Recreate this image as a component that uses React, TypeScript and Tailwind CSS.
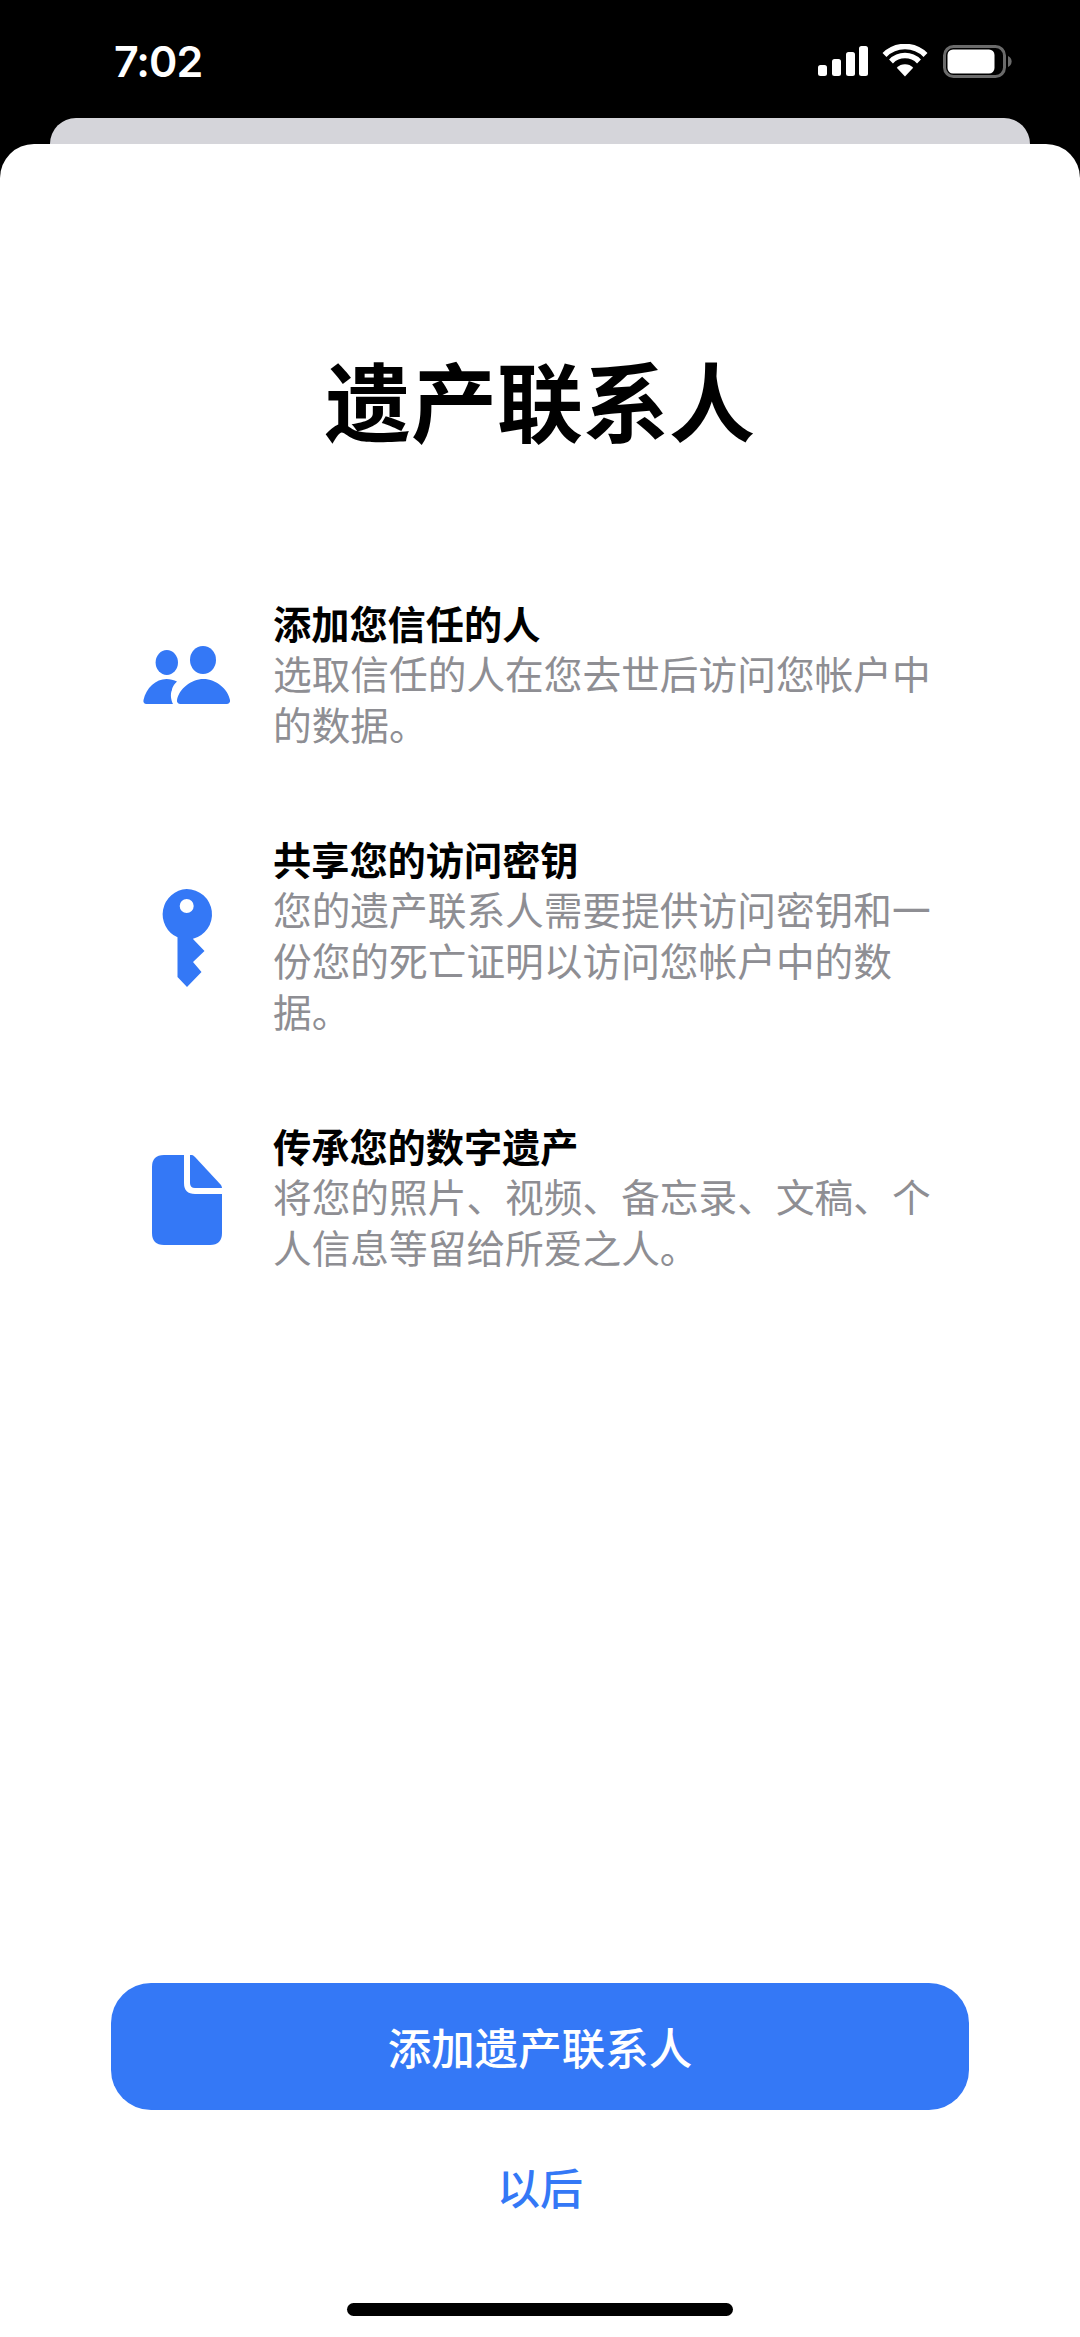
const cjk = "font-['Noto_Sans_CJK_SC','Noto_Sans_CJK_JP',sans-serif]";

function StatusIcons() {
  return (
    <svg width="194" height="34" viewBox="818 44 194 34" className="block">
      <rect x="818" y="65" width="9" height="11" rx="2.5" fill="#fff" />
      <rect x="832" y="59" width="9" height="17" rx="2.5" fill="#fff" />
      <rect x="846" y="52" width="9" height="24" rx="2.5" fill="#fff" />
      <rect x="859" y="46" width="9" height="30" rx="2.5" fill="#fff" />
      <path d="M884.5 55 A29 29 0 0 1 925.5 55" fill="none" stroke="#fff" strokeWidth="5.6" />
      <path d="M891 61.500 A19.500 19.500 0 0 1 919 61.500" fill="none" stroke="#fff" strokeWidth="5.4" />
      <path d="M905 76.500 L896.800 67.800 A11.500 11.500 0 0 1 913.200 67.800 Z" fill="#fff" />
      <rect x="944.500" y="46.500" width="60" height="30" rx="9" fill="none" stroke="#6b6b6b" strokeWidth="3" />
      <rect x="947.500" y="49.500" width="47" height="24" rx="5.500" fill="#fff" />
      <path d="M1008 56 A6 6 0 0 1 1008 67 Z" fill="#6b6b6b" />
    </svg>
  );
}

function PeopleIcon() {
  return (
    <svg width="94" height="62" viewBox="140 644 94 62" className="block mt-[2px]" fill="#3478F6">
      <ellipse cx="166.800" cy="662.500" rx="11.200" ry="12.500" />
      <ellipse cx="203" cy="660" rx="13" ry="14" />
      <path d="M143.500 700 C146 688 156 679 166.500 679 C170 679 174 680 177 681.500 C172 686 172 690 172 690 C170 694 171 700 173 704 L146.500 704 C144 704 143 702 143.500 700 Z" />
      <path d="M177 700 C179 689 191 679 203.500 679 C216 679 228 689 230 700 C230.500 702 229 704 226.500 704 L180.500 704 C178 704 176.500 702 177 700 Z" />
    </svg>
  );
}

function KeyIcon() {
  return (
    <svg width="94" height="100" viewBox="140 887 94 100" className="block mt-[5px]">
      <path
        fill="#3478F6"
        fillRule="evenodd"
        d="M186.700 888 A25.300 25.300 0 0 1 193 937.800 L193 938 L204.500 950 L193 961 L201.500 971 L187 986 L177.500 976 L177.500 936.300 A25.300 25.300 0 0 1 186.700 888 Z M186.700 898 A7 7 0 1 0 186.700 912 A7 7 0 1 0 186.700 898 Z"
      />
    </svg>
  );
}

function DocIcon() {
  return (
    <svg width="94" height="92" viewBox="140 1153 94 92" className="block mt-[6px]" fill="#3478F6">
      <path d="M164 1154 L184 1154 L184 1182 Q184 1193 195 1193 L222 1193 L222 1232 Q222 1244 210 1244 L164 1244 Q152 1244 152 1232 L152 1166 Q152 1154 164 1154 Z" />
      <path d="M190 1154 L192 1154 Q193 1154 195 1156 L221 1184 Q222 1186 222 1187 L195 1187 Q190 1187 190 1182 Z" />
    </svg>
  );
}

function Row({ icon, title, body }: { icon: React.ReactNode; title: string; body: string }) {
  return (
    <div className="flex items-center">
      <div className="w-[94px] shrink-0 flex justify-center">{icon}</div>
      <div className="ml-[39px] w-[668px]">
        <div className="text-[38.2px] leading-[48px] font-semibold text-black">{title}</div>
        <div className="text-[38.700px] leading-[51px] text-[#8e8e93]">{body}</div>
      </div>
    </div>
  );
}

export default function App() {
  return (
    <div className={`w-[1080px] h-[2337px] bg-black flex flex-col overflow-hidden ${cjk}`}>
      <div className="h-[118px] shrink-0 flex justify-between items-start pl-[114px] pr-[68px] pt-[30px]">
        <span className="font-['Inter',sans-serif] text-[43px] leading-[62px] font-semibold tracking-[-1px] text-white">7:02</span>
        <div className="pt-[14px]">
          <StatusIcons />
        </div>
      </div>
      <div className="h-[26px] shrink-0 mx-[50px] bg-[#d5d5da] rounded-t-[28px]" />
      <div className="flex-1 bg-white rounded-t-[34px] flex flex-col">
        <h1 className="mt-[205px] text-center text-[86px] leading-[100px] font-semibold text-black">遗产联系人</h1>
        <div className="mt-[150px] ml-[140px] flex flex-col gap-[86px]">
          <Row icon={<PeopleIcon />} title="添加您信任的人" body="选取信任的人在您去世后访问您帐户中的数据。" />
          <Row icon={<KeyIcon />} title="共享您的访问密钥" body="您的遗产联系人需要提供访问密钥和一份您的死亡证明以访问您帐户中的数据。" />
          <Row icon={<DocIcon />} title="传承您的数字遗产" body="将您的照片、视频、备忘录、文稿、个人信息等留给所爱之人。" />
        </div>
        <div className="flex-1" />
        <button className="mx-[111px] h-[127px] rounded-[40px] bg-[#3478f6] text-white text-[43.500px] font-medium">添加遗产联系人</button>
        <div className="mt-[51px] text-center text-[43px] leading-[50px] font-medium text-[#3478f6]">以后</div>
        <div className="mt-[92px] mb-[21px] mx-auto w-[386px] h-[13px] rounded-full bg-black" />
      </div>
    </div>
  );
}
